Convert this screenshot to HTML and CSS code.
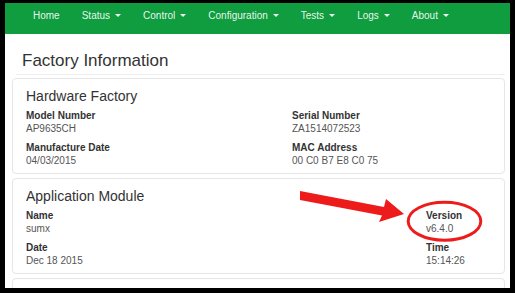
FILE: index.html
```html
<!DOCTYPE html>
<html>
<head>
<meta charset="utf-8">
<link rel="stylesheet" href="styles.css">
</head>
<body>
<div class="frame">
  <nav class="navbar">
    <ul class="nav">
      <li>Home</li>
      <li>Status<span class="caret"></span></li>
      <li>Control<span class="caret"></span></li>
      <li>Configuration<span class="caret"></span></li>
      <li>Tests<span class="caret"></span></li>
      <li>Logs<span class="caret"></span></li>
      <li>About<span class="caret"></span></li>
    </ul>
  </nav>
  <h1 class="page-title">Factory Information</h1>
  <section class="panel">
    <h2 class="panel-title">Hardware Factory</h2>
    <div class="grid grid-hw">
      <div class="field"><div class="label">Model Number</div><div class="value">AP9635CH</div></div>
      <div class="field"><div class="label">Serial Number</div><div class="value">ZA1514072523</div></div>
      <div class="field"><div class="label">Manufacture Date</div><div class="value">04/03/2015</div></div>
      <div class="field"><div class="label">MAC Address</div><div class="value">00 C0 B7 E8 C0 75</div></div>
    </div>
  </section>
  <section class="panel">
    <h2 class="panel-title">Application Module</h2>
    <div class="grid grid-app">
      <div class="field"><div class="label">Name</div><div class="value">sumx</div></div>
      <div class="field"><div class="label">Version</div><div class="value">v6.4.0</div></div>
      <div class="field"><div class="label">Date</div><div class="value">Dec 18 2015</div></div>
      <div class="field"><div class="label">Time</div><div class="value">15:14:26</div></div>
    </div>
  </section>
  <section class="panel"></section>
  <svg class="annot" width="505" height="285" viewBox="5 3 505 285">
    <polygon points="300,191 384,207 386,199 404,214 379,222 382,215.6 300,200" fill="#ee1b1b"/>
    <ellipse cx="444.5" cy="221.2" rx="36.3" ry="19" fill="none" stroke="#ee1b1b" stroke-width="3"/>
  </svg>
</div>
</body>
</html>
```
FILE: styles.css
```css
html, body {
  margin: 0;
  padding: 0;
  background: #000;
}
body {
  width: 515px;
  height: 293px;
  overflow: hidden;
}
.frame {
  position: relative;
  margin: 3px 0 0 5px;
  width: 505px;
  height: 285px;
  background: #fff;
  overflow: hidden;
  font-family: "Liberation Sans", Arial, sans-serif;
  color: #333;
}
.navbar {
  height: 31px;
  box-sizing: border-box;
  padding-top: 6px;
  background: #0f9d3f;
}
.nav {
  list-style: none;
  margin: 0;
  padding: 0 0 0 17px;
  display: flex;
}
.nav li {
  padding: 0 11px;
  font-size: 10px;
  line-height: 14px;
  color: rgba(255,255,255,0.92);
}
.caret {
  display: inline-block;
  width: 0;
  height: 0;
  margin-left: 5px;
  vertical-align: 2px;
  border-top: 3px solid rgba(255,255,255,0.92);
  border-left: 3px solid transparent;
  border-right: 3px solid transparent;
}
.page-title {
  margin: 17px 5px 0 11px;
  padding: 0 0 3px 6px;
  font-size: 17px;
  line-height: 20px;
  font-weight: normal;
  color: #333;
  border-bottom: 1px solid #eeeeee;
}
.panel {
  margin: 3px 5px 0 7px;
  padding: 9px 12px 6px 13px;
  border: 1px solid #e6e6e6;
  border-radius: 4px;
}
.panel + .panel {
  margin-top: 4px;
}
.panel-title {
  margin: 0 0 5px;
  font-size: 14px;
  line-height: 16px;
  font-weight: normal;
  color: #333;
}
.grid {
  display: grid;
  row-gap: 6px;
}
.grid-hw {
  grid-template-columns: 266px 1fr;
}
.grid-app {
  grid-template-columns: 400px 1fr;
}
.label {
  font-size: 10px;
  line-height: 13px;
  font-weight: bold;
  color: #333;
}
.value {
  font-size: 10px;
  line-height: 13px;
  color: #555;
}
.annot {
  position: absolute;
  left: 0;
  top: 0;
}
```
